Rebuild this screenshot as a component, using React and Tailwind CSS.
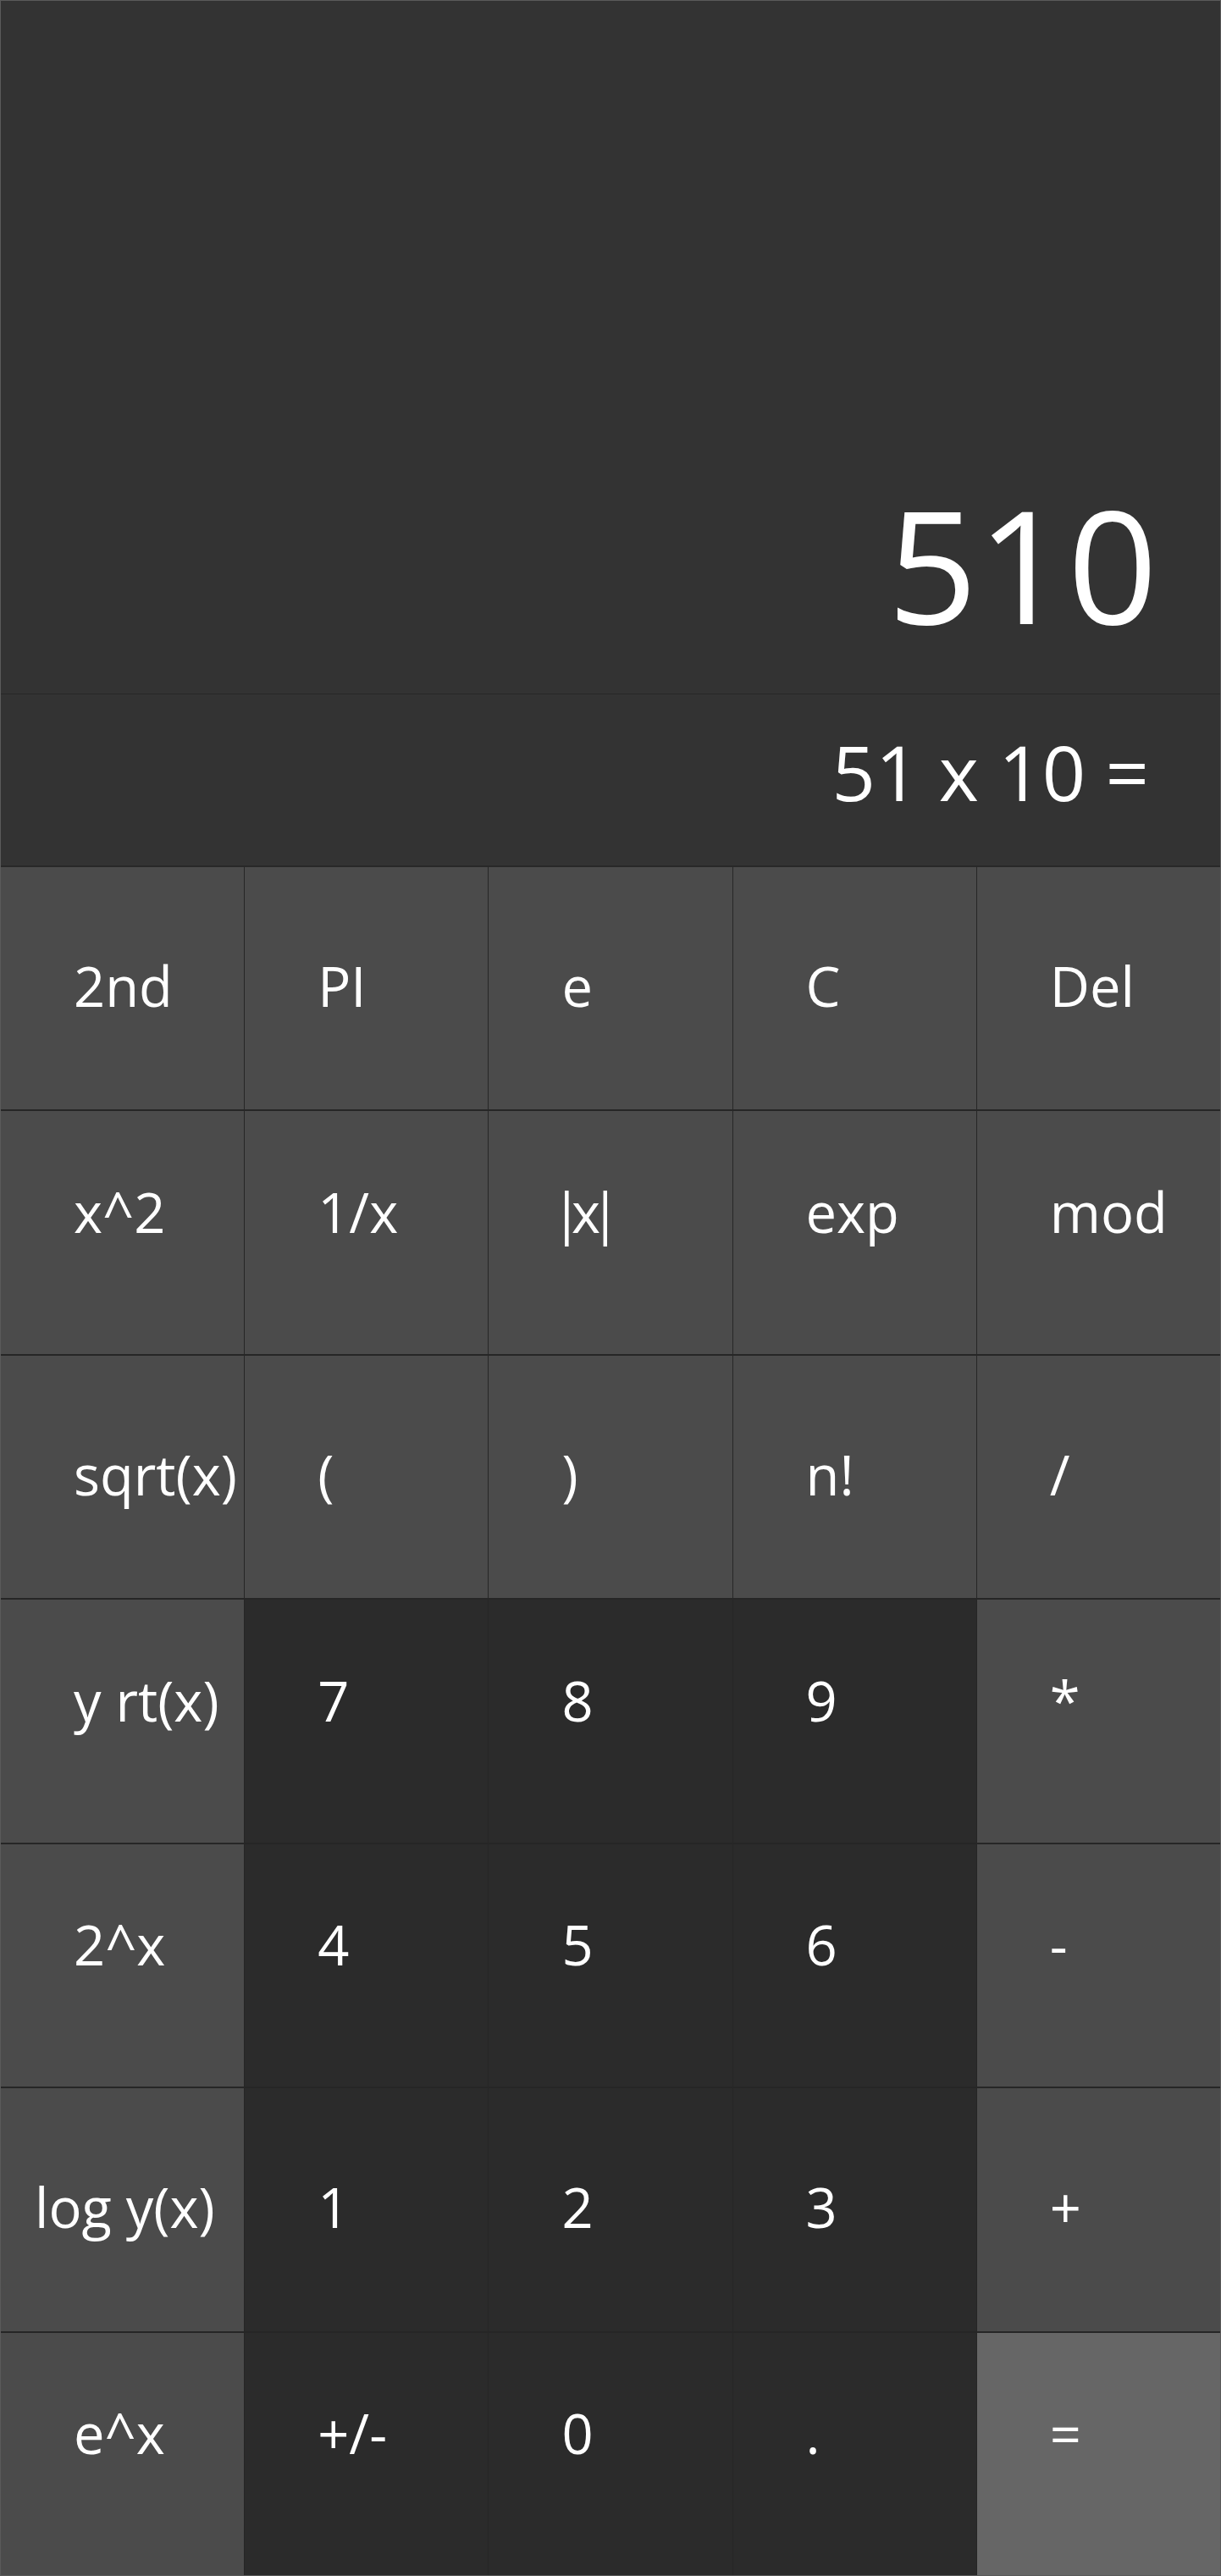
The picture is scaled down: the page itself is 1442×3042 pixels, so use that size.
const rows = [
  [
    { label: '2nd', kind: 'fn' },
    { label: 'PI', kind: 'fn' },
    { label: 'e', kind: 'fn' },
    { label: 'C', kind: 'fn' },
    { label: 'Del', kind: 'fn' },
  ],
  [
    { label: 'x^2', kind: 'fn', up: true },
    { label: '1/x', kind: 'fn', up: true },
    { label: '|x|', kind: 'fn', up: true, tight: true },
    { label: 'exp', kind: 'fn', up: true },
    { label: 'mod', kind: 'fn', up: true },
  ],
  [
    { label: 'sqrt(x)', kind: 'fn' },
    { label: '(', kind: 'fn' },
    { label: ')', kind: 'fn' },
    { label: 'n!', kind: 'fn' },
    { label: '/', kind: 'fn' },
  ],
  [
    { label: 'y rt(x)', kind: 'fn', up: true },
    { label: '7', kind: 'num', up: true },
    { label: '8', kind: 'num', up: true },
    { label: '9', kind: 'num', up: true },
    { label: '*', kind: 'fn', up: true },
  ],
  [
    { label: '2^x', kind: 'fn', up: true },
    { label: '4', kind: 'num', up: true },
    { label: '5', kind: 'num', up: true },
    { label: '6', kind: 'num', up: true },
    { label: '-', kind: 'fn', up: true },
  ],
  [
    { label: 'log y(x)', kind: 'fn', wide: true },
    { label: '1', kind: 'num' },
    { label: '2', kind: 'num' },
    { label: '3', kind: 'num' },
    { label: '+', kind: 'fn' },
  ],
  [
    { label: 'e^x', kind: 'fn', up: true },
    { label: '+/-', kind: 'num', up: true },
    { label: '0', kind: 'num', up: true },
    { label: '.', kind: 'num', up: true },
    { label: '=', kind: 'eq', up: true },
  ],
];

const bg = {
  fn: 'bg-[#4b4b4b]',
  num: 'bg-[#2b2b2b]',
  eq: 'bg-[#666666]',
};

function Key({ label, kind, wide, up, tight }) {
  let pad = 'pl-[86px]';
  if (wide) pad = 'pl-[40px]';
  if (tight) pad = 'pl-[74px] tracking-[-12px]';
  return (
    <button
      className={`${bg[kind]} flex items-center text-white text-[65px] leading-none whitespace-nowrap overflow-visible ${pad} ${
        up ? 'pb-[48px]' : 'pb-[6px]'
      }`}
    >
      {label}
    </button>
  );
}

export default function App() {
  return (
    <div
      className="w-[1442px] h-[3042px] flex flex-col bg-[#262626] border border-[#5a5a5a]"
      style={{ fontFamily: '"Open Sans", "Noto Sans", sans-serif' }}
    >
      <div className="h-[819px] shrink-0 bg-[#333333] flex items-end justify-end pr-[74px] pb-[61px] border-b border-[#282828]">
        <span className="text-white text-[186px] leading-none">510</span>
      </div>
      <div className="h-[204px] shrink-0 bg-[#333333] flex items-end justify-end pr-[84px] pb-[66px] border-b-2 border-[#282828]">
        <span className="text-white text-[90px] leading-none">51 x 10 =</span>
      </div>
      <div className="flex-1 grid grid-cols-5 grid-rows-7 gap-x-px gap-y-[2px]">
        {rows.flat().map((k, i) => (
          <Key key={i} {...k} />
        ))}
      </div>
    </div>
  );
}
